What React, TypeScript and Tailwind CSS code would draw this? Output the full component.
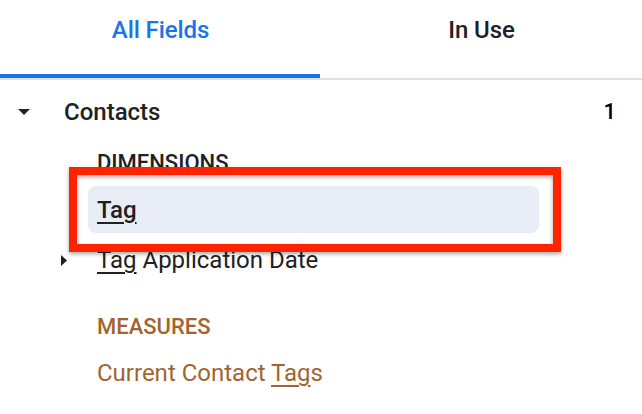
import React from "react";

function TagU() {
  return (
    <span className="underline decoration-2 underline-offset-[4px]">Tag</span>
  );
}

export default function App() {
  return (
    <div
      className="relative w-[642px] h-[414px] overflow-hidden bg-white text-[#202124]"
      style={{ fontFamily: "Roboto, 'Noto Sans', sans-serif" }}
    >
      {/* Tabs */}
      <div className="flex h-[74px]">
        <div className="flex-1 flex justify-center pt-[14px]">
          <span className="text-[24px] leading-[32px] font-medium text-[#1a73e8] tracking-[-0.1px]">
            All Fields
          </span>
        </div>
        <div className="flex-1 flex justify-center pt-[14px]">
          <span className="text-[24px] leading-[32px] font-medium text-[#202124] tracking-[-0.1px]">
            In Use
          </span>
        </div>
      </div>
      <div className="flex h-[4px]">
        <div className="w-[320px] bg-[#1a73e8]" />
      </div>
      <div className="h-[2px] bg-[#e0e0e0]" />

      {/* Contacts row */}
      <div className="flex items-center h-[64px] pr-[26px]">
        <div className="w-[64px] flex pl-[18px]">
          <svg width="12" height="6" viewBox="0 0 12 6">
            <path d="M0 0 L12 0 L6 6 Z" fill="#202124" />
          </svg>
        </div>
        <span className="flex-1 text-[24px] leading-[32px] font-medium">Contacts</span>
        <span className="text-[22px] leading-[32px] font-medium text-black">1</span>
      </div>

      {/* Dimensions */}
      <div className="pl-[97px] mt-[7px] text-[22px] leading-[24px] font-medium">DIMENSIONS</div>

      <div className="mt-[11px] ml-[88px] w-[451px] h-[47px] rounded-[8px] bg-[#e8edf5] flex items-center pl-[9px]">
        <span className="text-[24px] leading-[32px] font-medium">
          <TagU />
        </span>
      </div>

      <div className="mt-[11px] flex items-center h-[32px]">
        <div className="w-[97px] flex pl-[61px]">
          <svg width="6" height="11" viewBox="0 0 6 11">
            <path d="M0 0 L6 5.5 L0 11 Z" fill="#202124" />
          </svg>
        </div>
        <span className="text-[24px] leading-[32px]">
          <TagU /> Application Date
        </span>
      </div>

      {/* Measures */}
      <div className="pl-[97px] mt-[39px] text-[22px] leading-[24px] font-medium text-[#a2652f]">
        MEASURES
      </div>
      <div className="pl-[97px] mt-[18px] text-[24px] leading-[32px] text-[#a2652f]">
        Current Contact <TagU />s
      </div>

      {/* Annotation box */}
      <div className="absolute left-[69px] top-[167px] w-[492px] h-[85px] border-[8px] border-[#ff2400] shadow-[0_2px_4px_rgba(0,0,0,0.35),inset_0_2px_4px_rgba(0,0,0,0.35)]" />
    </div>
  );
}
